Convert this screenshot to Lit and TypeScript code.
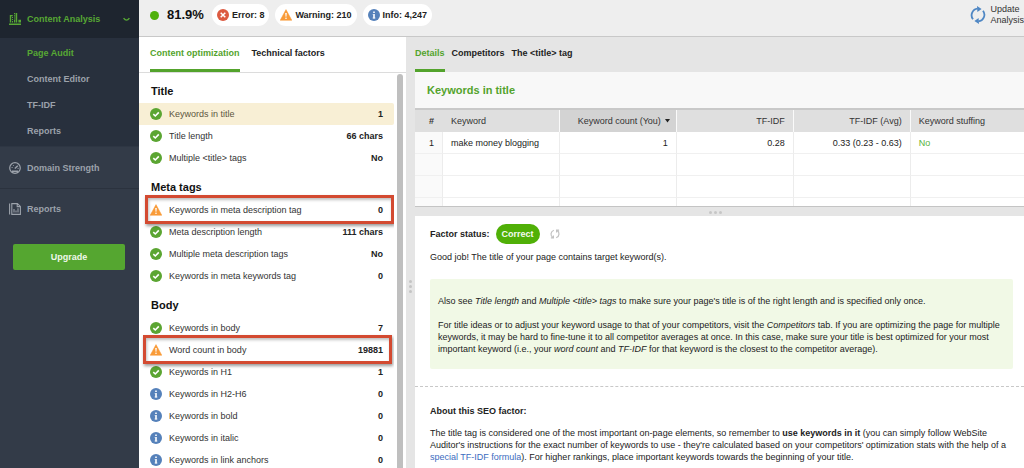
import { LitElement, html, css, svg } from "lit";
import { customElement, property, state } from "lit/decorators.js";
import { classMap } from "lit/directives/class-map.js";

type Kind = "ok" | "warning" | "error" | "info";

interface Factor {
  kind: Kind;
  label: string;
  value: string;
  mark?: "wide" | "shifted";
}

const GROUPS: { title: string; factors: Factor[] }[] = [
  {
    title: "Title",
    factors: [
      { kind: "ok", label: "Keywords in title", value: "1" },
      { kind: "ok", label: "Title length", value: "66 chars" },
      { kind: "ok", label: "Multiple <title> tags", value: "No" },
    ],
  },
  {
    title: "Meta tags",
    factors: [
      { kind: "warning", label: "Keywords in meta description tag", value: "0", mark: "wide" },
      { kind: "ok", label: "Meta description length", value: "111 chars" },
      { kind: "ok", label: "Multiple meta description tags", value: "No" },
      { kind: "ok", label: "Keywords in meta keywords tag", value: "0" },
    ],
  },
  {
    title: "Body",
    factors: [
      { kind: "ok", label: "Keywords in body", value: "7" },
      { kind: "warning", label: "Word count in body", value: "19881", mark: "shifted" },
      { kind: "ok", label: "Keywords in H1", value: "1" },
      { kind: "info", label: "Keywords in H2-H6", value: "0" },
      { kind: "info", label: "Keywords in bold", value: "0" },
      { kind: "info", label: "Keywords in italic", value: "0" },
      { kind: "info", label: "Keywords in link anchors", value: "0" },
    ],
  },
];

const GLYPHS = {
  ok: svg`<circle cx="6" cy="6" r="6" fill="#5ba532"/><path d="M3.3 6.1 5.3 8 8.8 4.4" fill="none" stroke="#fff" stroke-width="1.6"/>`,
  error: svg`<circle cx="6" cy="6" r="6" fill="#dc5a41"/><path d="M3.7 3.7 8.3 8.3M8.3 3.7 3.7 8.3" fill="none" stroke="#fff" stroke-width="1.5"/>`,
  info: svg`<circle cx="6" cy="6" r="6" fill="#5581ba"/><path d="M5.2 2.4H6.8V4H5.2ZM5.2 5H6.8V9.4H5.2Z" fill="#fff"/><path d="M4.6 5H5.2V5.8H4.6ZM4.6 8.6H7.4V9.4H4.6Z" fill="#fff" opacity=".7"/>`,
  warning: svg`<path d="M6 .6 11.8 11.3H.2Z" fill="#f99b38" stroke="#f99b38" stroke-width=".5" stroke-linejoin="round"/><path d="M5.2 4H6.8L6.4 7.8H5.6Z" fill="#fff"/><circle cx="6" cy="9.3" r=".8" fill="#fff"/>`,
};

const reset = css`
  * { box-sizing: border-box; }
  button {
    font: inherit;
    color: inherit;
    background: none;
    border: 0;
    padding: 0;
    margin: 0;
    cursor: pointer;
    text-align: left;
  }
  h2, h3, p, ul { margin: 0; padding: 0; list-style: none; }
  a { text-decoration: none; color: inherit; }
  svg { display: block; flex: none; }
`;

@customElement("status-icon")
class StatusIcon extends LitElement {
  static styles = css`
    :host { display: block; width: 12px; height: 12px; flex: none; }
    svg { display: block; }
  `;
  @property() kind: Kind = "ok";
  render() {
    return html`<svg width="12" height="12" viewBox="0 0 12 12" aria-hidden="true">${GLYPHS[this.kind]}</svg>`;
  }
}

@customElement("side-nav")
class SideNav extends LitElement {
  static styles = [reset, css`
    :host { display: block; background: #333b48; color: #9ca2ab; font-weight: bold; }
    .item { display: flex; align-items: center; gap: 6px; height: 41px; padding: 0 9px; }
    .item svg { width: 12px; height: 12px; }
    .item + .item { border-top: 1px solid #2b323e; }
    .open { height: 38px; background: #1e252f; color: #57a834; }
    .open svg.chevron { width: 7px; height: 5px; margin-left: auto; }
    .sub { background: #28303d; padding: 2px 0; border-bottom: 1px solid #2e3643; }
    .sub a { display: flex; align-items: center; height: 26px; padding-left: 27px; }
    .sub a.current { color: #57a834; }
    .upgrade {
      display: block;
      width: calc(100% - 27px);
      margin: 15px 14px 0 13px;
      height: 26px;
      border-radius: 2px;
      background: #55a630;
      color: #eff8ea;
      text-align: center;
    }
  `];
  render() {
    return html`
      <nav aria-label="Main">
        <a class="item open" href="#analysis">
          <svg viewBox="0 0 12 12" aria-hidden="true" fill="#57a834">
            <path d="M0 10.6H12V12H0ZM.8 2H3.8V3.2H2.2V9.6H.8ZM3 4H4V5H3ZM3 6H4V7H3ZM3 8H4V9.6H3ZM5 0H6V1.2H5ZM5 2.2H6V3.4H5ZM5 4.4H6V5.6H5ZM5 6.6H6V9.6H5ZM6.6 0H8.2V9.6H6.6ZM9.4 6.8H12V9.6H9.4Z"/>
          </svg>
          Content Analysis
          <svg class="chevron" viewBox="0 0 7 5" aria-hidden="true"><path d="M.6 1.2Q3.5 5 6.4 1.2" fill="none" stroke="#57a834" stroke-width="1.4"/></svg>
        </a>
        <div class="sub">
          <a class="current" href="#audit">Page Audit</a>
          <a href="#editor">Content Editor</a>
          <a href="#tfidf">TF-IDF</a>
          <a href="#sub-reports">Reports</a>
        </div>
        <a class="item" href="#domain">
          <svg viewBox="0 0 12 12" aria-hidden="true" fill="none" stroke="#9ca2ab" stroke-width="1.2">
            <circle cx="6" cy="6" r="5.3"/><path d="M3 9.2H9M5.8 6.5 8.8 3.8" stroke-width="1.5"/><path d="M2.6 5.5H3.6M4.2 3.2 4.8 4M8.6 6.4H9.6" stroke-width="1"/>
          </svg>
          Domain Strength
        </a>
        <a class="item" href="#reports">
          <svg viewBox="0 0 12 12" aria-hidden="true" fill="none" stroke="#9ca2ab" stroke-width="1.1">
            <path d="M.6 .5V11.5M2.8 .6H8.4L11.4 3.4V11.4H2.8ZM8.2 .8V3.6H11.2M5 6V9.6M7 7.4V9.6M9 5.2V9.6"/>
          </svg>
          Reports
        </a>
      </nav>
      <button class="upgrade">Upgrade</button>
    `;
  }
}

@customElement("factor-list")
class FactorList extends LitElement {
  static styles = [reset, css`
    :host { display: flex; flex-direction: column; min-height: 0; background: #fff; }
    .tabs { display: flex; gap: 12px; height: 36px; flex: none; padding: 0 11px; border-bottom: 1px solid #dcdcdc; font-weight: bold; }
    .tabs button { height: 35px; border-bottom: 3px solid transparent; }
    .tabs .active { color: #53a32c; border-color: #53a32c; }
    .scroll { display: flex; flex: 1; min-height: 0; }
    .groups { flex: 1; min-width: 0; overflow: hidden; }
    .bar { flex: none; width: 6px; margin: 1px 3px 0; border-radius: 3px 3px 0 0; background: #bfbfbf; }
    h3 { height: 30px; padding: 6px 12px 0; line-height: 24px; font-size: 11px; color: #111; }
    li { position: relative; }
    .row { display: flex; align-items: center; gap: 7px; width: 100%; height: 22px; padding: 0 11px; color: #333; }
    .label { flex: 1; }
    .value { font-weight: bold; color: #222; }
    .selected { background: #f8efd5; color: #5d563f; border-radius: 0 2px 2px 0; }
    .mark {
      position: absolute;
      z-index: 1;
      inset: -4px 0 -3px 6px;
      border: 3px solid #d34a31;
      box-shadow: 1px 2px 3px rgba(0, 0, 0, .4), inset 1px 2px 3px rgba(0, 0, 0, .25);
      pointer-events: none;
    }
    .mark.shifted { inset: -4px 2px -3px 4px; }
  `];
  @state() private selected = "Keywords in title";
  render() {
    return html`
      <div class="tabs" role="tablist">
        <button class="active" role="tab" aria-selected="true">Content optimization</button>
        <button role="tab" aria-selected="false">Technical factors</button>
      </div>
      <div class="scroll">
        <div class="groups">
          ${GROUPS.map((g) => html`
            <section>
              <h3>${g.title}</h3>
              <ul>
                ${g.factors.map((f) => html`
                  <li>
                    <button class=${classMap({ row: true, selected: f.label === this.selected })} @click=${() => (this.selected = f.label)}>
                      <status-icon kind=${f.kind}></status-icon>
                      <span class="label">${f.label}</span>
                      <span class="value">${f.value}</span>
                    </button>
                    ${f.mark ? html`<span class="mark ${f.mark}"></span>` : ""}
                  </li>`)}
              </ul>
            </section>`)}
        </div>
        <div class="bar"></div>
      </div>
    `;
  }
}

@customElement("factor-details")
class FactorDetails extends LitElement {
  static styles = [reset, css`
    :host { display: flex; flex-direction: column; min-width: 0; min-height: 0; background: #e5e5e5; }
    .tabs { display: flex; gap: 7px; height: 35px; flex: none; font-weight: bold; color: #222; }
    .tabs button { height: 35px; border-bottom: 3px solid transparent; }
    .tabs .active { color: #53a32c; border-color: #53a32c; }
    h2 { height: 36px; flex: none; padding: 0 12px; line-height: 36px; font-size: 11px; color: #53a32c; background: #f8f8f8; }
    .grid { height: 99px; flex: none; overflow: hidden; background: #fff; border-top: 2px solid #c9c9c9; border-bottom: 1px solid #c4c4c4; }
    table { width: 100%; table-layout: fixed; border-collapse: separate; border-spacing: 0; }
    .num { width: 28px; }
    .col { width: 19.2%; }
    th, td { height: 22px; padding: 0 8px; text-align: left; border-right: 1px solid #ececec; }
    th { font-weight: normal; color: #333; background: #dfdfdf; border-right-color: #fafafa; }
    th:first-child { border-right-color: #dfdfdf; font-weight: bold; }
    td { border-bottom: 1px solid #f0f0f0; color: #222; }
    th:last-child, td:last-child { border-right: 0; }
    th:first-child, td:first-child { text-align: center; padding: 0 4px 0 10px; }
    td:first-child { background: #fafafa; }
    th.right, td.right { text-align: right; }
    th.sorted { background: #d3d3d3; padding-right: 6px; }
    .sorted button { display: inline-flex; align-items: center; gap: 4px; }
    td.good { color: #57b33a; }
    .handle { display: flex; justify-content: center; align-items: center; gap: 2px; height: 9px; flex: none; padding: 2px 8px 0 0; }
    .handle i { width: 3px; height: 3px; border-radius: 50%; background: #c6c6c6; }
    .text { flex: 1; min-height: 0; overflow: hidden; background: #fff; color: #222; line-height: 12px; }
    .status { display: flex; align-items: center; gap: 6px; height: 20px; margin: 8px 15px 0; font-weight: bold; }
    .badge { height: 20px; padding: 0 6px; line-height: 20px; border-radius: 10px; background: #50b007; color: #f4fbef; }
    .status button { margin-left: 4px; }
    .verdict { margin: 7px 15px 16px; }
    .tip { margin: 0 11px 17px 15px; padding: 16px 8px 14px; border-radius: 2px; background: #f1f9e6; }
    .tip p + p { margin-top: 12px; }
    .about { border-top: 1px dashed #c8c8c8; padding: 18px 15px 0; }
    .about h3 { margin-bottom: 10px; font-size: 9px; }
    .about a { color: #3b6cc0; }
  `];
  render() {
    return html`
      <div class="tabs" role="tablist">
        <button class="active" role="tab" aria-selected="true">Details</button>
        <button role="tab" aria-selected="false">Competitors</button>
        <button role="tab" aria-selected="false">The &lt;title&gt; tag</button>
      </div>
      <h2>Keywords in title</h2>
      <div class="grid">
        <table>
          <colgroup><col class="num"><col class="col"><col class="col"><col class="col"><col class="col"><col></colgroup>
          <thead>
            <tr>
              <th>#</th>
              <th>Keyword</th>
              <th class="right sorted" aria-sort="descending">
                <button>Keyword count (You)<svg width="5" height="4" viewBox="0 0 5 4" aria-hidden="true"><path d="M0 0H5L2.5 3.5Z" fill="#222"/></svg></button>
              </th>
              <th class="right">TF-IDF</th>
              <th class="right">TF-IDF (Avg)</th>
              <th>Keyword stuffing</th>
            </tr>
          </thead>
          <tbody>
            <tr>
              <td>1</td><td>make money blogging</td><td class="right">1</td>
              <td class="right">0.28</td><td class="right">0.33 (0.23 - 0.63)</td><td class="good">No</td>
            </tr>
            ${[0, 1, 2].map(() => html`<tr><td></td><td></td><td></td><td></td><td></td><td></td></tr>`)}
          </tbody>
        </table>
      </div>
      <div class="handle"><i></i><i></i><i></i></div>
      <div class="text">
        <div class="status">
          <span>Factor status:</span>
          <span class="badge">Correct</span>
          <button aria-label="Recheck factor">
            <svg width="10" height="10" viewBox="0 0 10 10" fill="none" stroke="#c2c2c2" stroke-width="1.2" aria-hidden="true">
              <path d="M3.8 1.2C.2 2.6.2 7.2 3 8.6M.9 8.9H3.4V6.4M6.2 8.8C9.8 7.4 9.8 2.8 7 1.4M9.1 1.1H6.6V3.6"/>
            </svg>
          </button>
        </div>
        <p class="verdict">Good job! The title of your page contains target keyword(s).</p>
        <div class="tip">
          <p>Also see <em>Title length</em> and <em>Multiple &lt;title&gt; tags</em> to make sure your page's title is of the right length and is specified only once.</p>
          <p>For title ideas or to adjust your keyword usage to that of your competitors, visit the <em>Competitors</em> tab. If you are optimizing the page for multiple keywords, it may be hard to fine-tune it to all competitor averages at once. In this case, make sure your title is best optimized for your most important keyword (i.e., your <em>word count</em> and <em>TF-IDF</em> for that keyword is the closest to the competitor average).</p>
        </div>
        <section class="about">
          <h3>About this SEO factor:</h3>
          <p>The title tag is considered one of the most important on-page elements, so remember to <b>use keywords in it</b> (you can simply follow WebSite Auditor's instructions for the exact number of keywords to use - they're calculated based on your competitors' optimization stats with the help of a <a href="#formula">special TF-IDF formula</a>). For higher rankings, place important keywords towards the beginning of your title.</p>
        </section>
      </div>
    `;
  }
}

@customElement("app-root")
class AppRoot extends LitElement {
  static styles = [reset, css`
    :host {
      display: grid;
      grid-template-columns: 139px minmax(0, 1fr);
      height: 100vh;
      overflow: hidden;
      font: 9px/12px "Liberation Sans", Arial, sans-serif;
      color: #222;
    }
    .main { display: flex; flex-direction: column; min-height: 0; }
    .top { display: flex; align-items: center; height: 37px; flex: none; padding: 0 0 6px 11px; background: #eee; border-bottom: 1px solid #c8c8c8; }
    .dot { width: 9px; height: 9px; border-radius: 50%; background: #4fb00b; }
    .score { margin: 0 8px; font-size: 13px; font-weight: bold; color: #111; }
    .pills { display: flex; gap: 6px; }
    .pill { display: flex; align-items: center; gap: 3px; height: 22px; padding: 0 5px; border-radius: 11px; background: #fff; font-weight: bold; }
    .update { display: flex; align-items: center; gap: 4px; margin-left: auto; line-height: 11px; color: #333; }
    .body { display: grid; grid-template-columns: 267px 9px minmax(0, 1fr); flex: 1; min-height: 0; }
    .gutter { display: flex; flex-direction: column; align-items: center; justify-content: center; gap: 2px; padding-top: 68px; background: #e5e5e5; }
    .gutter i { width: 3px; height: 3px; border-radius: 50%; background: #c4c4c4; }
  `];
  render() {
    return html`
      <side-nav></side-nav>
      <main class="main">
        <header class="top">
          <span class="dot"></span>
          <span class="score">81.9%</span>
          <div class="pills">
            <button class="pill"><status-icon kind="error"></status-icon>Error: 8</button>
            <button class="pill"><status-icon kind="warning"></status-icon>Warning: 210</button>
            <button class="pill"><status-icon kind="info"></status-icon>Info: 4,247</button>
          </div>
          <button class="update">
            <svg width="16" height="18" viewBox="0 0 16 18" fill="none" stroke="#4f87c4" stroke-width="1.8" aria-hidden="true">
              <path d="M3 13.3A6.6 6.6 0 0 1 7.6 2.7M13 4.7A6.6 6.6 0 0 1 8.4 15.3"/>
              <path d="M7 0 11.6 3 7.4 6ZM9 18 4.4 15 8.6 12Z" fill="#4f87c4" stroke="none"/>
            </svg>
            <span>Update<br>Analysis</span>
          </button>
        </header>
        <div class="body">
          <factor-list></factor-list>
          <div class="gutter"><i></i><i></i><i></i></div>
          <factor-details></factor-details>
        </div>
      </main>
    `;
  }
}
